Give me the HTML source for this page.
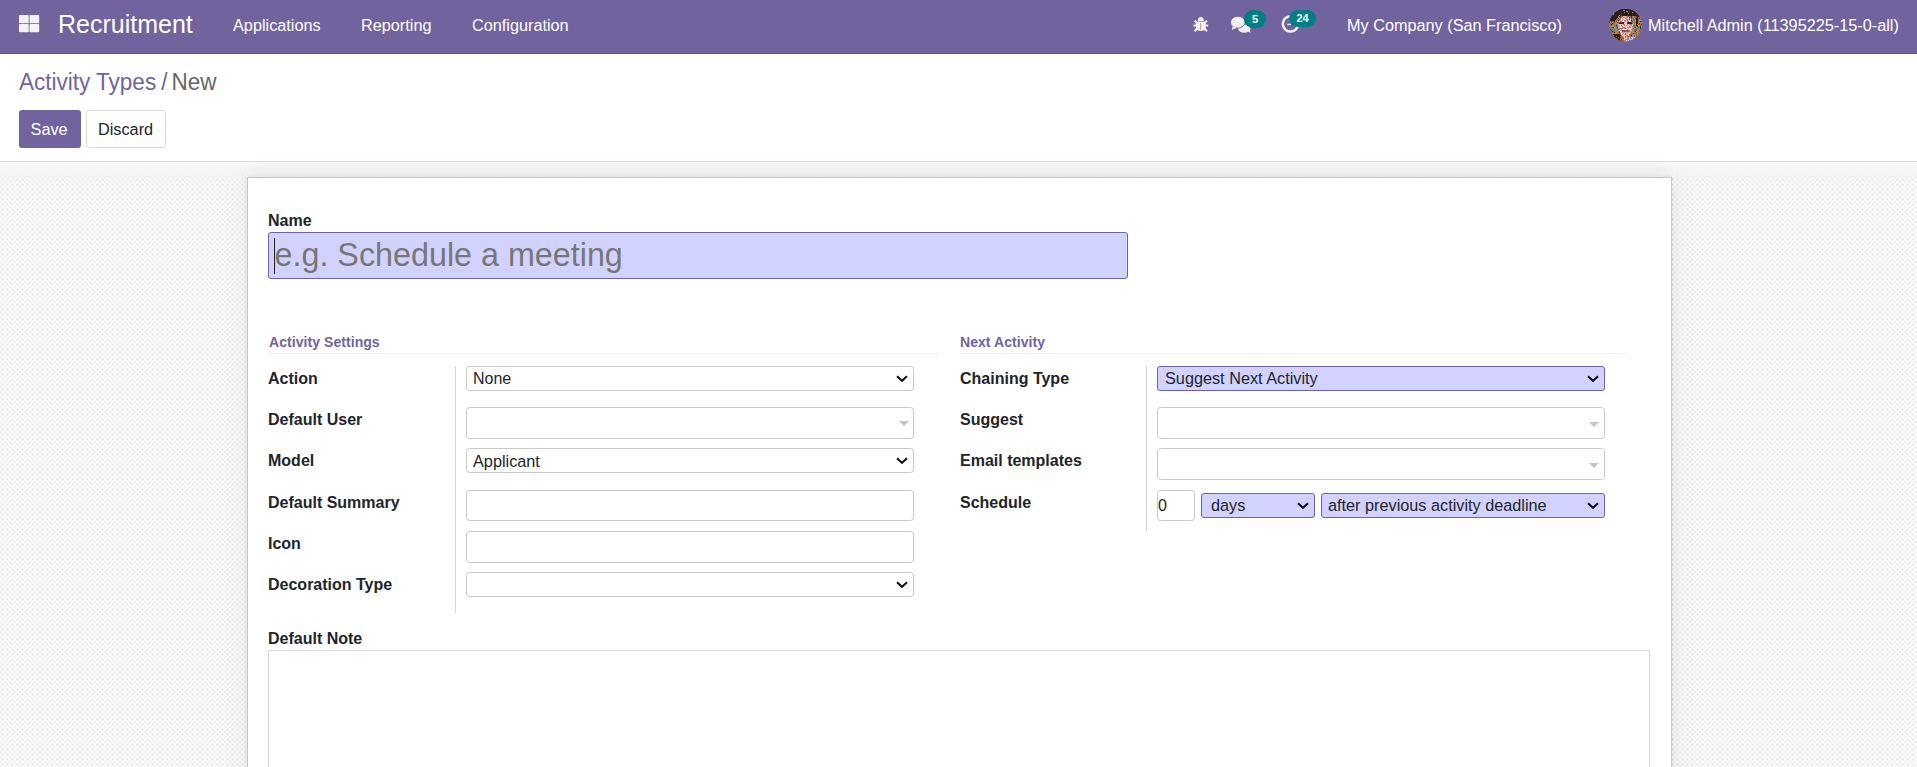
<!DOCTYPE html>
<html><head><meta charset="utf-8">
<style>
*{box-sizing:border-box;margin:0;padding:0}
html,body{width:1917px;height:767px;overflow:hidden;background:#fff;font-family:"Liberation Sans",sans-serif;color:#212529}
.a{position:absolute;white-space:nowrap}
.t16{font-size:16px;line-height:16px}
.n16{font-size:16.25px;line-height:16px}
.b{font-weight:700}
#nav{position:absolute;left:0;top:0;width:1917px;height:54px;background:#71639e;border-bottom:1px solid #5e5189}
#nav .a{color:#fff}
#cp{position:absolute;left:0;top:54px;width:1917px;height:108px;background:#fff;border-bottom:1px solid #dcdcdc}
#bg{position:absolute;left:0;top:162px;width:1917px;height:605px;
 background-color:#fdfdfd;
 background-image:radial-gradient(circle at 2.5px 2.5px,#e7e7e7 0,#e9e9e9 0.7px,rgba(233,233,233,0) 1.6px),radial-gradient(circle at 2.5px 2.5px,#e7e7e7 0,#e9e9e9 0.7px,rgba(233,233,233,0) 1.6px);
 background-size:5px 5px;background-position:0 0,2.5px 2.5px;
}
#band{position:absolute;left:0;top:162px;width:1917px;height:16px;background:linear-gradient(#f7f7f7 0%,#f4f5f5 60%,rgba(242,243,243,.55) 100%)}
#sheet{position:absolute;left:247px;top:177px;width:1425px;height:620px;background:#fff;border:1px solid #c6c4d8;box-shadow:0 0 3px rgba(0,0,0,.08),0 0 24px rgba(0,0,0,.09)}
.sel{position:absolute;height:25px;border:1px solid #c8c8c8;border-radius:3.5px;background:#fff}
.inp{position:absolute;height:32px;border:1px solid #c8c8c8;border-radius:3.5px;background:#fff}
.foc{background:#d2d2ff;border-color:#6f62a6;border-radius:3px}
.chev{position:absolute;width:13px;height:8px}
.tri{position:absolute;width:0;height:0;border-left:5px solid transparent;border-right:5px solid transparent;border-top:5px solid #c4c4c4}
.vl{position:absolute;width:1px;background:#d6d6d6}
.hs{position:absolute;height:1px;background:#f0f0f0}
.sect{font-size:14px;line-height:14px;font-weight:700;color:#71639e;letter-spacing:.06px}
.badge{position:absolute;background:#017e84;color:#fff;font-size:11px;line-height:11px;font-weight:700;text-align:center}
</style></head><body>
<domain style="display:none">Computer-Use</domain>

<div id="nav">
  <svg class="a" style="left:19px;top:15px" width="21" height="18" viewBox="0 0 21 18">
    <rect x="0" y="0" width="9.7" height="8.2" rx=".8" fill="#f2f2f2"/>
    <rect x="10.5" y="0" width="9.7" height="8.2" rx=".8" fill="#f2f2f2"/>
    <rect x="0" y="9" width="9.7" height="8.2" rx=".8" fill="#f2f2f2"/>
    <rect x="10.5" y="9" width="9.7" height="8.2" rx=".8" fill="#f2f2f2"/>
  </svg>
  <div class="a" style="left:58px;top:12px;font-size:25px;line-height:25px">Recruitment</div>
  <div class="a n16" style="left:233px;top:17px">Applications</div>
  <div class="a n16" style="left:361px;top:17px">Reporting</div>
  <div class="a n16" style="left:472px;top:17px">Configuration</div>

  <!-- bug -->
  <svg class="a" style="left:1188px;top:12px" width="26" height="24" viewBox="0 0 26 24" fill="#f0f0f0" stroke="#f0f0f0">
    <path d="M9.8 9 Q9.8 5 12.8 5 Q15.8 5 15.8 9 Z" stroke="none"/>
    <path d="M8.8 9.6 H16.8 Q17.8 9.6 17.8 11 V15 Q17.8 19 12.8 19 Q7.8 19 7.8 15 V11 Q7.8 9.6 8.8 9.6 Z" stroke="none"/>
    <g stroke-width="2" stroke-linecap="butt">
      <line x1="6.6" y1="8.6" x2="9.6" y2="11.6"/>
      <line x1="19" y1="8.6" x2="16" y2="11.6"/>
      <line x1="5.4" y1="13.5" x2="20.2" y2="13.5"/>
      <line x1="6.6" y1="19.2" x2="9.4" y2="16.2"/>
      <line x1="19" y1="19.2" x2="16.2" y2="16.2"/>
    </g>
    <line x1="12.6" y1="11" x2="12.6" y2="18.4" stroke="#c29f8c" stroke-width="1"/>
  </svg>
  <!-- comments -->
  <svg class="a" style="left:1226px;top:6px" width="44" height="30" viewBox="0 0 44 30" fill="#f0f0f0">
    <ellipse cx="18.2" cy="22.6" rx="6.2" ry="4.1"/>
    <path d="M21.5 25 L24.6 26.9 L23.6 23 Z"/>
    <ellipse cx="11.8" cy="16.2" rx="7.3" ry="5.9" stroke="#71639e" stroke-width=".9"/>
    <path d="M6.6 20.2 L5.9 24.1 L10.8 21.4 Z"/>
  </svg>
  <div class="badge" style="left:1244px;top:10px;width:22px;height:18px;border-radius:9px;padding-top:4px">5</div>
  <!-- clock -->
  <svg class="a" style="left:1276px;top:6px" width="30" height="30" viewBox="0 0 30 30">
    <circle cx="14.5" cy="17.9" r="7.7" fill="none" stroke="#f0f0f0" stroke-width="2.5"/>
    <line x1="11.3" y1="18.4" x2="15" y2="18.4" stroke="#f0f0f0" stroke-width="1.5"/>
  </svg>
  <div class="badge" style="left:1289px;top:10px;width:27px;height:17px;border-radius:8.5px;padding-top:3px">24</div>

  <div class="a n16" style="left:1347px;top:17px">My Company (San Francisco)</div>
  <!-- avatar -->
  <svg class="a" style="left:1609px;top:9px" width="33" height="33" viewBox="0 0 33 33"><defs><clipPath id="av"><circle cx="16.5" cy="16" r="16.4"/></clipPath></defs><g clip-path="url(#av)" shape-rendering="crispEdges"><rect x="11" y="0" width="1" height="1" fill="#2a1c18"/><rect x="12" y="0" width="1" height="1" fill="#32201a"/><rect x="13" y="0" width="1" height="1" fill="#2a1c18"/><rect x="14" y="0" width="1" height="1" fill="#2a1c18"/><rect x="15" y="0" width="1" height="1" fill="#32201a"/><rect x="16" y="0" width="1" height="1" fill="#32201a"/><rect x="17" y="0" width="1" height="1" fill="#2a1c18"/><rect x="18" y="0" width="1" height="1" fill="#32201a"/><rect x="19" y="0" width="1" height="1" fill="#32201a"/><rect x="20" y="0" width="1" height="1" fill="#2a1c18"/><rect x="21" y="0" width="1" height="1" fill="#2a1c18"/><rect x="9" y="1" width="1" height="1" fill="#2a1c18"/><rect x="10" y="1" width="1" height="1" fill="#2a1c18"/><rect x="11" y="1" width="1" height="1" fill="#2a1c18"/><rect x="12" y="1" width="1" height="1" fill="#32201a"/><rect x="13" y="1" width="1" height="1" fill="#2a1c18"/><rect x="14" y="1" width="1" height="1" fill="#8a8480"/><rect x="15" y="1" width="1" height="1" fill="#8a8480"/><rect x="16" y="1" width="1" height="1" fill="#32201a"/><rect x="17" y="1" width="1" height="1" fill="#32201a"/><rect x="18" y="1" width="1" height="1" fill="#2a1c18"/><rect x="19" y="1" width="1" height="1" fill="#2a1c18"/><rect x="20" y="1" width="1" height="1" fill="#32201a"/><rect x="21" y="1" width="1" height="1" fill="#2a1c18"/><rect x="22" y="1" width="1" height="1" fill="#2a1c18"/><rect x="23" y="1" width="1" height="1" fill="#2a1c18"/><rect x="7" y="2" width="1" height="1" fill="#2a1c18"/><rect x="8" y="2" width="1" height="1" fill="#2a1c18"/><rect x="9" y="2" width="1" height="1" fill="#2a1c18"/><rect x="10" y="2" width="1" height="1" fill="#2a1c18"/><rect x="11" y="2" width="1" height="1" fill="#32201a"/><rect x="12" y="2" width="1" height="1" fill="#32201a"/><rect x="13" y="2" width="1" height="1" fill="#2a1c18"/><rect x="14" y="2" width="1" height="1" fill="#32201a"/><rect x="15" y="2" width="1" height="1" fill="#2a1c18"/><rect x="16" y="2" width="1" height="1" fill="#2a1c18"/><rect x="17" y="2" width="1" height="1" fill="#8a8480"/><rect x="18" y="2" width="1" height="1" fill="#8a8480"/><rect x="19" y="2" width="1" height="1" fill="#2a1c18"/><rect x="20" y="2" width="1" height="1" fill="#6a3a1a"/><rect x="21" y="2" width="1" height="1" fill="#2a1c18"/><rect x="22" y="2" width="1" height="1" fill="#2a1c18"/><rect x="23" y="2" width="1" height="1" fill="#2a1c18"/><rect x="24" y="2" width="1" height="1" fill="#2a1c18"/><rect x="25" y="2" width="1" height="1" fill="#2a1c18"/><rect x="6" y="3" width="1" height="1" fill="#2a1c18"/><rect x="7" y="3" width="1" height="1" fill="#2a1c18"/><rect x="8" y="3" width="1" height="1" fill="#2a1c18"/><rect x="9" y="3" width="1" height="1" fill="#2a1c18"/><rect x="10" y="3" width="1" height="1" fill="#2a1c18"/><rect x="11" y="3" width="1" height="1" fill="#2a1c18"/><rect x="12" y="3" width="1" height="1" fill="#2a1c18"/><rect x="13" y="3" width="1" height="1" fill="#2a1c18"/><rect x="14" y="3" width="1" height="1" fill="#2a1c18"/><rect x="15" y="3" width="1" height="1" fill="#8a8480"/><rect x="16" y="3" width="1" height="1" fill="#2a1c18"/><rect x="17" y="3" width="1" height="1" fill="#2a1c18"/><rect x="18" y="3" width="1" height="1" fill="#32201a"/><rect x="19" y="3" width="1" height="1" fill="#2a1c18"/><rect x="20" y="3" width="1" height="1" fill="#2a1c18"/><rect x="21" y="3" width="1" height="1" fill="#2a1c18"/><rect x="22" y="3" width="1" height="1" fill="#2a1c18"/><rect x="23" y="3" width="1" height="1" fill="#8a8480"/><rect x="24" y="3" width="1" height="1" fill="#6a3a1a"/><rect x="25" y="3" width="1" height="1" fill="#2a1c18"/><rect x="26" y="3" width="1" height="1" fill="#2a1c18"/><rect x="5" y="4" width="1" height="1" fill="#2a1c18"/><rect x="6" y="4" width="1" height="1" fill="#2a1c18"/><rect x="7" y="4" width="1" height="1" fill="#2a1c18"/><rect x="8" y="4" width="1" height="1" fill="#2a1c18"/><rect x="9" y="4" width="1" height="1" fill="#32201a"/><rect x="10" y="4" width="1" height="1" fill="#2a1c18"/><rect x="11" y="4" width="1" height="1" fill="#2a1c18"/><rect x="12" y="4" width="1" height="1" fill="#6a3a1a"/><rect x="13" y="4" width="1" height="1" fill="#2a1c18"/><rect x="14" y="4" width="1" height="1" fill="#32201a"/><rect x="15" y="4" width="1" height="1" fill="#2a1c18"/><rect x="16" y="4" width="1" height="1" fill="#2a1c18"/><rect x="17" y="4" width="1" height="1" fill="#2a1c18"/><rect x="18" y="4" width="1" height="1" fill="#2a1c18"/><rect x="19" y="4" width="1" height="1" fill="#8a8480"/><rect x="20" y="4" width="1" height="1" fill="#2a1c18"/><rect x="21" y="4" width="1" height="1" fill="#2a1c18"/><rect x="22" y="4" width="1" height="1" fill="#2a1c18"/><rect x="23" y="4" width="1" height="1" fill="#2a1c18"/><rect x="24" y="4" width="1" height="1" fill="#2a1c18"/><rect x="25" y="4" width="1" height="1" fill="#2a1c18"/><rect x="26" y="4" width="1" height="1" fill="#32201a"/><rect x="27" y="4" width="1" height="1" fill="#2a1c18"/><rect x="4" y="5" width="1" height="1" fill="#8a8480"/><rect x="5" y="5" width="1" height="1" fill="#2a1c18"/><rect x="6" y="5" width="1" height="1" fill="#2a1c18"/><rect x="7" y="5" width="1" height="1" fill="#2a1c18"/><rect x="8" y="5" width="1" height="1" fill="#2a1c18"/><rect x="9" y="5" width="1" height="1" fill="#2a1c18"/><rect x="10" y="5" width="1" height="1" fill="#2a1c18"/><rect x="11" y="5" width="1" height="1" fill="#2a1c18"/><rect x="12" y="5" width="1" height="1" fill="#32201a"/><rect x="13" y="5" width="1" height="1" fill="#2a1c18"/><rect x="14" y="5" width="1" height="1" fill="#32201a"/><rect x="15" y="5" width="1" height="1" fill="#2a1c18"/><rect x="16" y="5" width="1" height="1" fill="#2a1c18"/><rect x="17" y="5" width="1" height="1" fill="#2a1c18"/><rect x="18" y="5" width="1" height="1" fill="#2a1c18"/><rect x="19" y="5" width="1" height="1" fill="#32201a"/><rect x="20" y="5" width="1" height="1" fill="#2a1c18"/><rect x="21" y="5" width="1" height="1" fill="#2a1c18"/><rect x="22" y="5" width="1" height="1" fill="#2a1c18"/><rect x="23" y="5" width="1" height="1" fill="#2a1c18"/><rect x="24" y="5" width="1" height="1" fill="#2a1c18"/><rect x="25" y="5" width="1" height="1" fill="#2a1c18"/><rect x="26" y="5" width="1" height="1" fill="#2a1c18"/><rect x="27" y="5" width="1" height="1" fill="#6a3a1a"/><rect x="28" y="5" width="1" height="1" fill="#2a1c18"/><rect x="3" y="6" width="1" height="1" fill="#2a1c18"/><rect x="4" y="6" width="1" height="1" fill="#2a1c18"/><rect x="5" y="6" width="1" height="1" fill="#2a1c18"/><rect x="6" y="6" width="1" height="1" fill="#32201a"/><rect x="7" y="6" width="1" height="1" fill="#2a1c18"/><rect x="8" y="6" width="1" height="1" fill="#2a1c18"/><rect x="9" y="6" width="1" height="1" fill="#2a1c18"/><rect x="10" y="6" width="1" height="1" fill="#8a8480"/><rect x="11" y="6" width="1" height="1" fill="#2a1c18"/><rect x="12" y="6" width="1" height="1" fill="#6a3a1a"/><rect x="13" y="6" width="1" height="1" fill="#2a1c18"/><rect x="14" y="6" width="1" height="1" fill="#2a1c18"/><rect x="15" y="6" width="1" height="1" fill="#32201a"/><rect x="16" y="6" width="1" height="1" fill="#2a1c18"/><rect x="17" y="6" width="1" height="1" fill="#2a1c18"/><rect x="18" y="6" width="1" height="1" fill="#6a3a1a"/><rect x="19" y="6" width="1" height="1" fill="#2a1c18"/><rect x="20" y="6" width="1" height="1" fill="#2a1c18"/><rect x="21" y="6" width="1" height="1" fill="#32201a"/><rect x="22" y="6" width="1" height="1" fill="#2a1c18"/><rect x="23" y="6" width="1" height="1" fill="#32201a"/><rect x="24" y="6" width="1" height="1" fill="#2a1c18"/><rect x="25" y="6" width="1" height="1" fill="#2a1c18"/><rect x="26" y="6" width="1" height="1" fill="#2a1c18"/><rect x="27" y="6" width="1" height="1" fill="#2a1c18"/><rect x="28" y="6" width="1" height="1" fill="#2a1c18"/><rect x="29" y="6" width="1" height="1" fill="#2a1c18"/><rect x="2" y="7" width="1" height="1" fill="#2a1c18"/><rect x="3" y="7" width="1" height="1" fill="#2a1c18"/><rect x="4" y="7" width="1" height="1" fill="#2a1c18"/><rect x="5" y="7" width="1" height="1" fill="#32201a"/><rect x="6" y="7" width="1" height="1" fill="#2a1c18"/><rect x="7" y="7" width="1" height="1" fill="#2a1c18"/><rect x="8" y="7" width="1" height="1" fill="#2a1c18"/><rect x="9" y="7" width="1" height="1" fill="#9c948c"/><rect x="10" y="7" width="1" height="1" fill="#4a2c1c"/><rect x="11" y="7" width="1" height="1" fill="#4a2c1c"/><rect x="12" y="7" width="1" height="1" fill="#787470"/><rect x="13" y="7" width="1" height="1" fill="#b0601c"/><rect x="14" y="7" width="1" height="1" fill="#e4bcb0"/><rect x="15" y="7" width="1" height="1" fill="#e4bcb0"/><rect x="16" y="7" width="1" height="1" fill="#e8c8c0"/><rect x="17" y="7" width="1" height="1" fill="#c890b0"/><rect x="18" y="7" width="1" height="1" fill="#8c8a90"/><rect x="19" y="7" width="1" height="1" fill="#b0601c"/><rect x="20" y="7" width="1" height="1" fill="#787470"/><rect x="21" y="7" width="1" height="1" fill="#787470"/><rect x="22" y="7" width="1" height="1" fill="#4a2c1c"/><rect x="23" y="7" width="1" height="1" fill="#8a8a86"/><rect x="24" y="7" width="1" height="1" fill="#9c948c"/><rect x="25" y="7" width="1" height="1" fill="#b0601c"/><rect x="26" y="7" width="1" height="1" fill="#787470"/><rect x="27" y="7" width="1" height="1" fill="#6a3a1a"/><rect x="28" y="7" width="1" height="1" fill="#2a1c18"/><rect x="29" y="7" width="1" height="1" fill="#4a2c1c"/><rect x="30" y="7" width="1" height="1" fill="#4a2c1c"/><rect x="2" y="8" width="1" height="1" fill="#2a1c18"/><rect x="3" y="8" width="1" height="1" fill="#2a1c18"/><rect x="4" y="8" width="1" height="1" fill="#2a1c18"/><rect x="5" y="8" width="1" height="1" fill="#32201a"/><rect x="6" y="8" width="1" height="1" fill="#2a1c18"/><rect x="7" y="8" width="1" height="1" fill="#2a1c18"/><rect x="8" y="8" width="1" height="1" fill="#2a1c18"/><rect x="9" y="8" width="1" height="1" fill="#d09038"/><rect x="10" y="8" width="1" height="1" fill="#9a5a28"/><rect x="11" y="8" width="1" height="1" fill="#787470"/><rect x="12" y="8" width="1" height="1" fill="#787470"/><rect x="13" y="8" width="1" height="1" fill="#d4a092"/><rect x="14" y="8" width="1" height="1" fill="#c08070"/><rect x="15" y="8" width="1" height="1" fill="#c08070"/><rect x="16" y="8" width="1" height="1" fill="#e4bcb0"/><rect x="17" y="8" width="1" height="1" fill="#c08070"/><rect x="18" y="8" width="1" height="1" fill="#8c8a90"/><rect x="19" y="8" width="1" height="1" fill="#e8c8c0"/><rect x="20" y="8" width="1" height="1" fill="#4a2c1c"/><rect x="21" y="8" width="1" height="1" fill="#8a8a86"/><rect x="22" y="8" width="1" height="1" fill="#4a2c1c"/><rect x="23" y="8" width="1" height="1" fill="#787470"/><rect x="24" y="8" width="1" height="1" fill="#8a8a86"/><rect x="25" y="8" width="1" height="1" fill="#9a5a28"/><rect x="26" y="8" width="1" height="1" fill="#b0601c"/><rect x="27" y="8" width="1" height="1" fill="#6a3a1a"/><rect x="28" y="8" width="1" height="1" fill="#2a1c18"/><rect x="29" y="8" width="1" height="1" fill="#787470"/><rect x="30" y="8" width="1" height="1" fill="#787470"/><rect x="1" y="9" width="1" height="1" fill="#2a1c18"/><rect x="2" y="9" width="1" height="1" fill="#32201a"/><rect x="3" y="9" width="1" height="1" fill="#2a1c18"/><rect x="4" y="9" width="1" height="1" fill="#32201a"/><rect x="5" y="9" width="1" height="1" fill="#2a1c18"/><rect x="6" y="9" width="1" height="1" fill="#2a1c18"/><rect x="7" y="9" width="1" height="1" fill="#2a1c18"/><rect x="8" y="9" width="1" height="1" fill="#8a8a86"/><rect x="9" y="9" width="1" height="1" fill="#4a2c1c"/><rect x="10" y="9" width="1" height="1" fill="#c07028"/><rect x="11" y="9" width="1" height="1" fill="#c07028"/><rect x="12" y="9" width="1" height="1" fill="#e8c8c0"/><rect x="13" y="9" width="1" height="1" fill="#c890b0"/><rect x="14" y="9" width="1" height="1" fill="#f0d6cc"/><rect x="15" y="9" width="1" height="1" fill="#e8c8c0"/><rect x="16" y="9" width="1" height="1" fill="#d4a092"/><rect x="17" y="9" width="1" height="1" fill="#c890b0"/><rect x="18" y="9" width="1" height="1" fill="#e4bcb0"/><rect x="19" y="9" width="1" height="1" fill="#f0d6cc"/><rect x="20" y="9" width="1" height="1" fill="#a86858"/><rect x="21" y="9" width="1" height="1" fill="#9c948c"/><rect x="22" y="9" width="1" height="1" fill="#9a5a28"/><rect x="23" y="9" width="1" height="1" fill="#8a8a86"/><rect x="24" y="9" width="1" height="1" fill="#787470"/><rect x="25" y="9" width="1" height="1" fill="#8a8a86"/><rect x="26" y="9" width="1" height="1" fill="#b0601c"/><rect x="27" y="9" width="1" height="1" fill="#2a1c18"/><rect x="28" y="9" width="1" height="1" fill="#2a1c18"/><rect x="29" y="9" width="1" height="1" fill="#9a5a28"/><rect x="30" y="9" width="1" height="1" fill="#4a2c1c"/><rect x="31" y="9" width="1" height="1" fill="#9c948c"/><rect x="1" y="10" width="1" height="1" fill="#2a1c18"/><rect x="2" y="10" width="1" height="1" fill="#2a1c18"/><rect x="3" y="10" width="1" height="1" fill="#2a1c18"/><rect x="4" y="10" width="1" height="1" fill="#2a1c18"/><rect x="5" y="10" width="1" height="1" fill="#2a1c18"/><rect x="6" y="10" width="1" height="1" fill="#2a1c18"/><rect x="7" y="10" width="1" height="1" fill="#787470"/><rect x="8" y="10" width="1" height="1" fill="#787470"/><rect x="9" y="10" width="1" height="1" fill="#8a8a86"/><rect x="10" y="10" width="1" height="1" fill="#9a5a28"/><rect x="11" y="10" width="1" height="1" fill="#8c8a90"/><rect x="12" y="10" width="1" height="1" fill="#f0d6cc"/><rect x="13" y="10" width="1" height="1" fill="#e4bcb0"/><rect x="14" y="10" width="1" height="1" fill="#e4bcb0"/><rect x="15" y="10" width="1" height="1" fill="#e8c8c0"/><rect x="16" y="10" width="1" height="1" fill="#e4bcb0"/><rect x="17" y="10" width="1" height="1" fill="#c890b0"/><rect x="18" y="10" width="1" height="1" fill="#c08070"/><rect x="19" y="10" width="1" height="1" fill="#d4a092"/><rect x="20" y="10" width="1" height="1" fill="#a86858"/><rect x="21" y="10" width="1" height="1" fill="#e4bcb0"/><rect x="22" y="10" width="1" height="1" fill="#b0601c"/><rect x="23" y="10" width="1" height="1" fill="#8a8a86"/><rect x="24" y="10" width="1" height="1" fill="#b0601c"/><rect x="25" y="10" width="1" height="1" fill="#9a5a28"/><rect x="26" y="10" width="1" height="1" fill="#c07028"/><rect x="27" y="10" width="1" height="1" fill="#2a1c18"/><rect x="28" y="10" width="1" height="1" fill="#2a1c18"/><rect x="29" y="10" width="1" height="1" fill="#787470"/><rect x="30" y="10" width="1" height="1" fill="#8a8a86"/><rect x="31" y="10" width="1" height="1" fill="#787470"/><rect x="0" y="11" width="1" height="1" fill="#32201a"/><rect x="1" y="11" width="1" height="1" fill="#2a1c18"/><rect x="2" y="11" width="1" height="1" fill="#2a1c18"/><rect x="3" y="11" width="1" height="1" fill="#32201a"/><rect x="4" y="11" width="1" height="1" fill="#2a1c18"/><rect x="5" y="11" width="1" height="1" fill="#2a1c18"/><rect x="6" y="11" width="1" height="1" fill="#c07028"/><rect x="7" y="11" width="1" height="1" fill="#b0601c"/><rect x="8" y="11" width="1" height="1" fill="#8a8a86"/><rect x="9" y="11" width="1" height="1" fill="#4a2c1c"/><rect x="10" y="11" width="1" height="1" fill="#c07028"/><rect x="11" y="11" width="1" height="1" fill="#d4a092"/><rect x="12" y="11" width="1" height="1" fill="#d4a092"/><rect x="13" y="11" width="1" height="1" fill="#c890b0"/><rect x="14" y="11" width="1" height="1" fill="#f0d6cc"/><rect x="15" y="11" width="1" height="1" fill="#c08070"/><rect x="16" y="11" width="1" height="1" fill="#a86858"/><rect x="17" y="11" width="1" height="1" fill="#d4a092"/><rect x="18" y="11" width="1" height="1" fill="#a86858"/><rect x="19" y="11" width="1" height="1" fill="#e8c8c0"/><rect x="20" y="11" width="1" height="1" fill="#e4bcb0"/><rect x="21" y="11" width="1" height="1" fill="#e8c8c0"/><rect x="22" y="11" width="1" height="1" fill="#4a2c1c"/><rect x="23" y="11" width="1" height="1" fill="#b0601c"/><rect x="24" y="11" width="1" height="1" fill="#8a8a86"/><rect x="25" y="11" width="1" height="1" fill="#787470"/><rect x="26" y="11" width="1" height="1" fill="#9c948c"/><rect x="27" y="11" width="1" height="1" fill="#2a1c18"/><rect x="28" y="11" width="1" height="1" fill="#32201a"/><rect x="29" y="11" width="1" height="1" fill="#9a5a28"/><rect x="30" y="11" width="1" height="1" fill="#d09038"/><rect x="31" y="11" width="1" height="1" fill="#9c948c"/><rect x="32" y="11" width="1" height="1" fill="#8a8a86"/><rect x="0" y="12" width="1" height="1" fill="#4a2c1c"/><rect x="1" y="12" width="1" height="1" fill="#c07028"/><rect x="2" y="12" width="1" height="1" fill="#4a2c1c"/><rect x="3" y="12" width="1" height="1" fill="#9a5a28"/><rect x="4" y="12" width="1" height="1" fill="#787470"/><rect x="5" y="12" width="1" height="1" fill="#4a2c1c"/><rect x="6" y="12" width="1" height="1" fill="#c07028"/><rect x="7" y="12" width="1" height="1" fill="#9a5a28"/><rect x="8" y="12" width="1" height="1" fill="#9c948c"/><rect x="9" y="12" width="1" height="1" fill="#9c948c"/><rect x="10" y="12" width="1" height="1" fill="#f0d6cc"/><rect x="11" y="12" width="1" height="1" fill="#a86858"/><rect x="12" y="12" width="1" height="1" fill="#d4a092"/><rect x="13" y="12" width="1" height="1" fill="#e8c8c0"/><rect x="14" y="12" width="1" height="1" fill="#e8c8c0"/><rect x="15" y="12" width="1" height="1" fill="#d4a092"/><rect x="16" y="12" width="1" height="1" fill="#e4bcb0"/><rect x="17" y="12" width="1" height="1" fill="#f0d6cc"/><rect x="18" y="12" width="1" height="1" fill="#c08070"/><rect x="19" y="12" width="1" height="1" fill="#a86858"/><rect x="20" y="12" width="1" height="1" fill="#f0d6cc"/><rect x="21" y="12" width="1" height="1" fill="#e4bcb0"/><rect x="22" y="12" width="1" height="1" fill="#a86858"/><rect x="23" y="12" width="1" height="1" fill="#b0601c"/><rect x="24" y="12" width="1" height="1" fill="#d09038"/><rect x="25" y="12" width="1" height="1" fill="#c07028"/><rect x="26" y="12" width="1" height="1" fill="#8a8a86"/><rect x="27" y="12" width="1" height="1" fill="#2a1c18"/><rect x="28" y="12" width="1" height="1" fill="#2a1c18"/><rect x="29" y="12" width="1" height="1" fill="#c07028"/><rect x="30" y="12" width="1" height="1" fill="#787470"/><rect x="31" y="12" width="1" height="1" fill="#4a2c1c"/><rect x="32" y="12" width="1" height="1" fill="#9a5a28"/><rect x="0" y="13" width="1" height="1" fill="#4a2c1c"/><rect x="1" y="13" width="1" height="1" fill="#9c948c"/><rect x="2" y="13" width="1" height="1" fill="#787470"/><rect x="3" y="13" width="1" height="1" fill="#9c948c"/><rect x="4" y="13" width="1" height="1" fill="#b0601c"/><rect x="5" y="13" width="1" height="1" fill="#c07028"/><rect x="6" y="13" width="1" height="1" fill="#787470"/><rect x="7" y="13" width="1" height="1" fill="#8a8a86"/><rect x="8" y="13" width="1" height="1" fill="#4a2c1c"/><rect x="9" y="13" width="1" height="1" fill="#787470"/><rect x="10" y="13" width="1" height="1" fill="#6a4030"/><rect x="11" y="13" width="1" height="1" fill="#6a4030"/><rect x="12" y="13" width="1" height="1" fill="#6a4030"/><rect x="13" y="13" width="1" height="1" fill="#3a2620"/><rect x="14" y="13" width="1" height="1" fill="#3a2620"/><rect x="15" y="13" width="1" height="1" fill="#c890b0"/><rect x="16" y="13" width="1" height="1" fill="#e8c8c0"/><rect x="17" y="13" width="1" height="1" fill="#e8c8c0"/><rect x="18" y="13" width="1" height="1" fill="#6a4030"/><rect x="19" y="13" width="1" height="1" fill="#2a1c18"/><rect x="20" y="13" width="1" height="1" fill="#3a2620"/><rect x="21" y="13" width="1" height="1" fill="#2a1c18"/><rect x="22" y="13" width="1" height="1" fill="#6a4030"/><rect x="23" y="13" width="1" height="1" fill="#787470"/><rect x="24" y="13" width="1" height="1" fill="#787470"/><rect x="25" y="13" width="1" height="1" fill="#c07028"/><rect x="26" y="13" width="1" height="1" fill="#787470"/><rect x="27" y="13" width="1" height="1" fill="#32201a"/><rect x="28" y="13" width="1" height="1" fill="#32201a"/><rect x="29" y="13" width="1" height="1" fill="#b0601c"/><rect x="30" y="13" width="1" height="1" fill="#9c948c"/><rect x="31" y="13" width="1" height="1" fill="#787470"/><rect x="32" y="13" width="1" height="1" fill="#8a8a86"/><rect x="0" y="14" width="1" height="1" fill="#9a5a28"/><rect x="1" y="14" width="1" height="1" fill="#787470"/><rect x="2" y="14" width="1" height="1" fill="#787470"/><rect x="3" y="14" width="1" height="1" fill="#4a2c1c"/><rect x="4" y="14" width="1" height="1" fill="#b0601c"/><rect x="5" y="14" width="1" height="1" fill="#787470"/><rect x="6" y="14" width="1" height="1" fill="#8a8a86"/><rect x="7" y="14" width="1" height="1" fill="#9c948c"/><rect x="8" y="14" width="1" height="1" fill="#9c948c"/><rect x="9" y="14" width="1" height="1" fill="#8a8a86"/><rect x="10" y="14" width="1" height="1" fill="#3a2620"/><rect x="11" y="14" width="1" height="1" fill="#3a2620"/><rect x="12" y="14" width="1" height="1" fill="#2a1c18"/><rect x="13" y="14" width="1" height="1" fill="#3a2620"/><rect x="14" y="14" width="1" height="1" fill="#3a2620"/><rect x="15" y="14" width="1" height="1" fill="#e8c8c0"/><rect x="16" y="14" width="1" height="1" fill="#e8c8c0"/><rect x="17" y="14" width="1" height="1" fill="#e8c8c0"/><rect x="18" y="14" width="1" height="1" fill="#6a4030"/><rect x="19" y="14" width="1" height="1" fill="#3a2620"/><rect x="20" y="14" width="1" height="1" fill="#2a1c18"/><rect x="21" y="14" width="1" height="1" fill="#2a1c18"/><rect x="22" y="14" width="1" height="1" fill="#3a2620"/><rect x="23" y="14" width="1" height="1" fill="#787470"/><rect x="24" y="14" width="1" height="1" fill="#9c948c"/><rect x="25" y="14" width="1" height="1" fill="#b0601c"/><rect x="26" y="14" width="1" height="1" fill="#d09038"/><rect x="27" y="14" width="1" height="1" fill="#2a1c18"/><rect x="28" y="14" width="1" height="1" fill="#2a1c18"/><rect x="29" y="14" width="1" height="1" fill="#c07028"/><rect x="30" y="14" width="1" height="1" fill="#4a2c1c"/><rect x="31" y="14" width="1" height="1" fill="#8a8a86"/><rect x="32" y="14" width="1" height="1" fill="#8a8a86"/><rect x="0" y="15" width="1" height="1" fill="#787470"/><rect x="1" y="15" width="1" height="1" fill="#b0601c"/><rect x="2" y="15" width="1" height="1" fill="#4a2c1c"/><rect x="3" y="15" width="1" height="1" fill="#b0601c"/><rect x="4" y="15" width="1" height="1" fill="#787470"/><rect x="5" y="15" width="1" height="1" fill="#8a8a86"/><rect x="6" y="15" width="1" height="1" fill="#c07028"/><rect x="7" y="15" width="1" height="1" fill="#787470"/><rect x="8" y="15" width="1" height="1" fill="#8a8a86"/><rect x="9" y="15" width="1" height="1" fill="#d4a092"/><rect x="10" y="15" width="1" height="1" fill="#f0d6cc"/><rect x="11" y="15" width="1" height="1" fill="#f0d6cc"/><rect x="12" y="15" width="1" height="1" fill="#e4bcb0"/><rect x="13" y="15" width="1" height="1" fill="#e4bcb0"/><rect x="14" y="15" width="1" height="1" fill="#c08070"/><rect x="15" y="15" width="1" height="1" fill="#c08070"/><rect x="16" y="15" width="1" height="1" fill="#f0d6cc"/><rect x="17" y="15" width="1" height="1" fill="#e8c8c0"/><rect x="18" y="15" width="1" height="1" fill="#c08070"/><rect x="19" y="15" width="1" height="1" fill="#e8c8c0"/><rect x="20" y="15" width="1" height="1" fill="#d4a092"/><rect x="21" y="15" width="1" height="1" fill="#a86858"/><rect x="22" y="15" width="1" height="1" fill="#a86858"/><rect x="23" y="15" width="1" height="1" fill="#e8c8c0"/><rect x="24" y="15" width="1" height="1" fill="#8a8a86"/><rect x="25" y="15" width="1" height="1" fill="#8a8a86"/><rect x="26" y="15" width="1" height="1" fill="#9c948c"/><rect x="27" y="15" width="1" height="1" fill="#2a1c18"/><rect x="28" y="15" width="1" height="1" fill="#8a8480"/><rect x="29" y="15" width="1" height="1" fill="#9a5a28"/><rect x="30" y="15" width="1" height="1" fill="#b0601c"/><rect x="31" y="15" width="1" height="1" fill="#c07028"/><rect x="32" y="15" width="1" height="1" fill="#4a2c1c"/><rect x="0" y="16" width="1" height="1" fill="#8a8a86"/><rect x="1" y="16" width="1" height="1" fill="#b0601c"/><rect x="2" y="16" width="1" height="1" fill="#9a5a28"/><rect x="3" y="16" width="1" height="1" fill="#8a8a86"/><rect x="4" y="16" width="1" height="1" fill="#d09038"/><rect x="5" y="16" width="1" height="1" fill="#b0601c"/><rect x="6" y="16" width="1" height="1" fill="#8a8a86"/><rect x="7" y="16" width="1" height="1" fill="#4a2c1c"/><rect x="8" y="16" width="1" height="1" fill="#b0601c"/><rect x="9" y="16" width="1" height="1" fill="#e4bcb0"/><rect x="10" y="16" width="1" height="1" fill="#c890b0"/><rect x="11" y="16" width="1" height="1" fill="#e8c8c0"/><rect x="12" y="16" width="1" height="1" fill="#8c8a90"/><rect x="13" y="16" width="1" height="1" fill="#e4bcb0"/><rect x="14" y="16" width="1" height="1" fill="#f0d6cc"/><rect x="15" y="16" width="1" height="1" fill="#a86858"/><rect x="16" y="16" width="1" height="1" fill="#f0d6cc"/><rect x="17" y="16" width="1" height="1" fill="#c890b0"/><rect x="18" y="16" width="1" height="1" fill="#e4bcb0"/><rect x="19" y="16" width="1" height="1" fill="#e4bcb0"/><rect x="20" y="16" width="1" height="1" fill="#e4bcb0"/><rect x="21" y="16" width="1" height="1" fill="#e4bcb0"/><rect x="22" y="16" width="1" height="1" fill="#c08070"/><rect x="23" y="16" width="1" height="1" fill="#f0d6cc"/><rect x="24" y="16" width="1" height="1" fill="#787470"/><rect x="25" y="16" width="1" height="1" fill="#b0601c"/><rect x="26" y="16" width="1" height="1" fill="#c07028"/><rect x="27" y="16" width="1" height="1" fill="#2a1c18"/><rect x="28" y="16" width="1" height="1" fill="#2a1c18"/><rect x="29" y="16" width="1" height="1" fill="#9c948c"/><rect x="30" y="16" width="1" height="1" fill="#9c948c"/><rect x="31" y="16" width="1" height="1" fill="#b0601c"/><rect x="32" y="16" width="1" height="1" fill="#b0601c"/><rect x="0" y="17" width="1" height="1" fill="#9c948c"/><rect x="1" y="17" width="1" height="1" fill="#8a8a86"/><rect x="2" y="17" width="1" height="1" fill="#d09038"/><rect x="3" y="17" width="1" height="1" fill="#8a8a86"/><rect x="4" y="17" width="1" height="1" fill="#8a8a86"/><rect x="5" y="17" width="1" height="1" fill="#787470"/><rect x="6" y="17" width="1" height="1" fill="#8a8a86"/><rect x="7" y="17" width="1" height="1" fill="#787470"/><rect x="8" y="17" width="1" height="1" fill="#b0601c"/><rect x="9" y="17" width="1" height="1" fill="#c890b0"/><rect x="10" y="17" width="1" height="1" fill="#e8c8c0"/><rect x="11" y="17" width="1" height="1" fill="#e4bcb0"/><rect x="12" y="17" width="1" height="1" fill="#f0d6cc"/><rect x="13" y="17" width="1" height="1" fill="#a86858"/><rect x="14" y="17" width="1" height="1" fill="#f0d6cc"/><rect x="15" y="17" width="1" height="1" fill="#e4bcb0"/><rect x="16" y="17" width="1" height="1" fill="#e4bcb0"/><rect x="17" y="17" width="1" height="1" fill="#f0d6cc"/><rect x="18" y="17" width="1" height="1" fill="#e4bcb0"/><rect x="19" y="17" width="1" height="1" fill="#e8c8c0"/><rect x="20" y="17" width="1" height="1" fill="#a86858"/><rect x="21" y="17" width="1" height="1" fill="#c890b0"/><rect x="22" y="17" width="1" height="1" fill="#e8c8c0"/><rect x="23" y="17" width="1" height="1" fill="#c08070"/><rect x="24" y="17" width="1" height="1" fill="#8a8a86"/><rect x="25" y="17" width="1" height="1" fill="#787470"/><rect x="26" y="17" width="1" height="1" fill="#787470"/><rect x="27" y="17" width="1" height="1" fill="#8a8480"/><rect x="28" y="17" width="1" height="1" fill="#2a1c18"/><rect x="29" y="17" width="1" height="1" fill="#8a8a86"/><rect x="30" y="17" width="1" height="1" fill="#9c948c"/><rect x="31" y="17" width="1" height="1" fill="#4a2c1c"/><rect x="32" y="17" width="1" height="1" fill="#d09038"/><rect x="0" y="18" width="1" height="1" fill="#9a5a28"/><rect x="1" y="18" width="1" height="1" fill="#8a8a86"/><rect x="2" y="18" width="1" height="1" fill="#9a5a28"/><rect x="3" y="18" width="1" height="1" fill="#9a5a28"/><rect x="4" y="18" width="1" height="1" fill="#4a2c1c"/><rect x="5" y="18" width="1" height="1" fill="#d09038"/><rect x="6" y="18" width="1" height="1" fill="#d09038"/><rect x="7" y="18" width="1" height="1" fill="#8a8a86"/><rect x="8" y="18" width="1" height="1" fill="#4a2c1c"/><rect x="9" y="18" width="1" height="1" fill="#e4bcb0"/><rect x="10" y="18" width="1" height="1" fill="#d4a092"/><rect x="11" y="18" width="1" height="1" fill="#f0d6cc"/><rect x="12" y="18" width="1" height="1" fill="#e4bcb0"/><rect x="13" y="18" width="1" height="1" fill="#d4a092"/><rect x="14" y="18" width="1" height="1" fill="#c08070"/><rect x="15" y="18" width="1" height="1" fill="#c08070"/><rect x="16" y="18" width="1" height="1" fill="#d4a092"/><rect x="17" y="18" width="1" height="1" fill="#e8c8c0"/><rect x="18" y="18" width="1" height="1" fill="#c890b0"/><rect x="19" y="18" width="1" height="1" fill="#d4a092"/><rect x="20" y="18" width="1" height="1" fill="#c890b0"/><rect x="21" y="18" width="1" height="1" fill="#c08070"/><rect x="22" y="18" width="1" height="1" fill="#f0d6cc"/><rect x="23" y="18" width="1" height="1" fill="#d4a092"/><rect x="24" y="18" width="1" height="1" fill="#9c948c"/><rect x="25" y="18" width="1" height="1" fill="#787470"/><rect x="26" y="18" width="1" height="1" fill="#4a2c1c"/><rect x="27" y="18" width="1" height="1" fill="#d09038"/><rect x="28" y="18" width="1" height="1" fill="#9c948c"/><rect x="29" y="18" width="1" height="1" fill="#b0601c"/><rect x="30" y="18" width="1" height="1" fill="#787470"/><rect x="31" y="18" width="1" height="1" fill="#4a2c1c"/><rect x="32" y="18" width="1" height="1" fill="#8a8a86"/><rect x="0" y="19" width="1" height="1" fill="#8a8a86"/><rect x="1" y="19" width="1" height="1" fill="#b0601c"/><rect x="2" y="19" width="1" height="1" fill="#c07028"/><rect x="3" y="19" width="1" height="1" fill="#8a8a86"/><rect x="4" y="19" width="1" height="1" fill="#b0601c"/><rect x="5" y="19" width="1" height="1" fill="#8a8a86"/><rect x="6" y="19" width="1" height="1" fill="#9c948c"/><rect x="7" y="19" width="1" height="1" fill="#787470"/><rect x="8" y="19" width="1" height="1" fill="#787470"/><rect x="9" y="19" width="1" height="1" fill="#8c8a90"/><rect x="10" y="19" width="1" height="1" fill="#c08070"/><rect x="11" y="19" width="1" height="1" fill="#8c8a90"/><rect x="12" y="19" width="1" height="1" fill="#c08070"/><rect x="13" y="19" width="1" height="1" fill="#a86858"/><rect x="14" y="19" width="1" height="1" fill="#e4bcb0"/><rect x="15" y="19" width="1" height="1" fill="#c08070"/><rect x="16" y="19" width="1" height="1" fill="#a86858"/><rect x="17" y="19" width="1" height="1" fill="#e4bcb0"/><rect x="18" y="19" width="1" height="1" fill="#e8c8c0"/><rect x="19" y="19" width="1" height="1" fill="#e4bcb0"/><rect x="20" y="19" width="1" height="1" fill="#f0d6cc"/><rect x="21" y="19" width="1" height="1" fill="#e4bcb0"/><rect x="22" y="19" width="1" height="1" fill="#f0d6cc"/><rect x="23" y="19" width="1" height="1" fill="#c08070"/><rect x="24" y="19" width="1" height="1" fill="#b0601c"/><rect x="25" y="19" width="1" height="1" fill="#9c948c"/><rect x="26" y="19" width="1" height="1" fill="#8a8a86"/><rect x="27" y="19" width="1" height="1" fill="#787470"/><rect x="28" y="19" width="1" height="1" fill="#787470"/><rect x="29" y="19" width="1" height="1" fill="#8a8a86"/><rect x="30" y="19" width="1" height="1" fill="#8a8a86"/><rect x="31" y="19" width="1" height="1" fill="#4a2c1c"/><rect x="32" y="19" width="1" height="1" fill="#787470"/><rect x="0" y="20" width="1" height="1" fill="#8a8a86"/><rect x="1" y="20" width="1" height="1" fill="#4a2c1c"/><rect x="2" y="20" width="1" height="1" fill="#8a8a86"/><rect x="3" y="20" width="1" height="1" fill="#b0601c"/><rect x="4" y="20" width="1" height="1" fill="#c07028"/><rect x="5" y="20" width="1" height="1" fill="#b0601c"/><rect x="6" y="20" width="1" height="1" fill="#c07028"/><rect x="7" y="20" width="1" height="1" fill="#d09038"/><rect x="8" y="20" width="1" height="1" fill="#8a8a86"/><rect x="9" y="20" width="1" height="1" fill="#9a5a28"/><rect x="10" y="20" width="1" height="1" fill="#a86858"/><rect x="11" y="20" width="1" height="1" fill="#e4bcb0"/><rect x="12" y="20" width="1" height="1" fill="#8c8a90"/><rect x="13" y="20" width="1" height="1" fill="#e8c8c0"/><rect x="14" y="20" width="1" height="1" fill="#e4bcb0"/><rect x="15" y="20" width="1" height="1" fill="#e8c8c0"/><rect x="16" y="20" width="1" height="1" fill="#f0d6cc"/><rect x="17" y="20" width="1" height="1" fill="#f0d6cc"/><rect x="18" y="20" width="1" height="1" fill="#8c8a90"/><rect x="19" y="20" width="1" height="1" fill="#d4a092"/><rect x="20" y="20" width="1" height="1" fill="#f0d6cc"/><rect x="21" y="20" width="1" height="1" fill="#e8c8c0"/><rect x="22" y="20" width="1" height="1" fill="#c890b0"/><rect x="23" y="20" width="1" height="1" fill="#8a8a86"/><rect x="24" y="20" width="1" height="1" fill="#9c948c"/><rect x="25" y="20" width="1" height="1" fill="#9a5a28"/><rect x="26" y="20" width="1" height="1" fill="#787470"/><rect x="27" y="20" width="1" height="1" fill="#b0601c"/><rect x="28" y="20" width="1" height="1" fill="#787470"/><rect x="29" y="20" width="1" height="1" fill="#8a8a86"/><rect x="30" y="20" width="1" height="1" fill="#c07028"/><rect x="31" y="20" width="1" height="1" fill="#b0601c"/><rect x="32" y="20" width="1" height="1" fill="#787470"/><rect x="0" y="21" width="1" height="1" fill="#b0601c"/><rect x="1" y="21" width="1" height="1" fill="#8a8a86"/><rect x="2" y="21" width="1" height="1" fill="#4a2c1c"/><rect x="3" y="21" width="1" height="1" fill="#8a8a86"/><rect x="4" y="21" width="1" height="1" fill="#8a8a86"/><rect x="5" y="21" width="1" height="1" fill="#787470"/><rect x="6" y="21" width="1" height="1" fill="#8a8a86"/><rect x="7" y="21" width="1" height="1" fill="#d09038"/><rect x="8" y="21" width="1" height="1" fill="#787470"/><rect x="9" y="21" width="1" height="1" fill="#9c948c"/><rect x="10" y="21" width="1" height="1" fill="#e8c8c0"/><rect x="11" y="21" width="1" height="1" fill="#c890b0"/><rect x="12" y="21" width="1" height="1" fill="#d4a092"/><rect x="13" y="21" width="1" height="1" fill="#7a4a3a"/><rect x="14" y="21" width="1" height="1" fill="#a06050"/><rect x="15" y="21" width="1" height="1" fill="#a06050"/><rect x="16" y="21" width="1" height="1" fill="#a06050"/><rect x="17" y="21" width="1" height="1" fill="#a06050"/><rect x="18" y="21" width="1" height="1" fill="#7a4a3a"/><rect x="19" y="21" width="1" height="1" fill="#a06050"/><rect x="20" y="21" width="1" height="1" fill="#a86858"/><rect x="21" y="21" width="1" height="1" fill="#e4bcb0"/><rect x="22" y="21" width="1" height="1" fill="#d4a092"/><rect x="23" y="21" width="1" height="1" fill="#9c948c"/><rect x="24" y="21" width="1" height="1" fill="#9c948c"/><rect x="25" y="21" width="1" height="1" fill="#9a5a28"/><rect x="26" y="21" width="1" height="1" fill="#b0601c"/><rect x="27" y="21" width="1" height="1" fill="#b0601c"/><rect x="28" y="21" width="1" height="1" fill="#8a8a86"/><rect x="29" y="21" width="1" height="1" fill="#8a8a86"/><rect x="30" y="21" width="1" height="1" fill="#787470"/><rect x="31" y="21" width="1" height="1" fill="#b0601c"/><rect x="32" y="21" width="1" height="1" fill="#787470"/><rect x="1" y="22" width="1" height="1" fill="#b0601c"/><rect x="2" y="22" width="1" height="1" fill="#b0601c"/><rect x="3" y="22" width="1" height="1" fill="#4a2c1c"/><rect x="4" y="22" width="1" height="1" fill="#787470"/><rect x="5" y="22" width="1" height="1" fill="#787470"/><rect x="6" y="22" width="1" height="1" fill="#8a8a86"/><rect x="7" y="22" width="1" height="1" fill="#8a8a86"/><rect x="8" y="22" width="1" height="1" fill="#c07028"/><rect x="9" y="22" width="1" height="1" fill="#8a8a86"/><rect x="10" y="22" width="1" height="1" fill="#a86858"/><rect x="11" y="22" width="1" height="1" fill="#e8c8c0"/><rect x="12" y="22" width="1" height="1" fill="#e4bcb0"/><rect x="13" y="22" width="1" height="1" fill="#7a4a3a"/><rect x="14" y="22" width="1" height="1" fill="#a06050"/><rect x="15" y="22" width="1" height="1" fill="#7a4a3a"/><rect x="16" y="22" width="1" height="1" fill="#a06050"/><rect x="17" y="22" width="1" height="1" fill="#a06050"/><rect x="18" y="22" width="1" height="1" fill="#a06050"/><rect x="19" y="22" width="1" height="1" fill="#a06050"/><rect x="20" y="22" width="1" height="1" fill="#a86858"/><rect x="21" y="22" width="1" height="1" fill="#d4a092"/><rect x="22" y="22" width="1" height="1" fill="#c890b0"/><rect x="23" y="22" width="1" height="1" fill="#9c948c"/><rect x="24" y="22" width="1" height="1" fill="#8a8a86"/><rect x="25" y="22" width="1" height="1" fill="#787470"/><rect x="26" y="22" width="1" height="1" fill="#4a2c1c"/><rect x="27" y="22" width="1" height="1" fill="#9c948c"/><rect x="28" y="22" width="1" height="1" fill="#8a8a86"/><rect x="29" y="22" width="1" height="1" fill="#8a8a86"/><rect x="30" y="22" width="1" height="1" fill="#b0601c"/><rect x="31" y="22" width="1" height="1" fill="#9a5a28"/><rect x="1" y="23" width="1" height="1" fill="#b0601c"/><rect x="2" y="23" width="1" height="1" fill="#b0601c"/><rect x="3" y="23" width="1" height="1" fill="#787470"/><rect x="4" y="23" width="1" height="1" fill="#787470"/><rect x="5" y="23" width="1" height="1" fill="#4a2c1c"/><rect x="6" y="23" width="1" height="1" fill="#8a8a86"/><rect x="7" y="23" width="1" height="1" fill="#d09038"/><rect x="8" y="23" width="1" height="1" fill="#b0601c"/><rect x="9" y="23" width="1" height="1" fill="#c07028"/><rect x="10" y="23" width="1" height="1" fill="#4a2c1c"/><rect x="11" y="23" width="1" height="1" fill="#e4bcb0"/><rect x="12" y="23" width="1" height="1" fill="#d4a092"/><rect x="13" y="23" width="1" height="1" fill="#c890b0"/><rect x="14" y="23" width="1" height="1" fill="#c890b0"/><rect x="15" y="23" width="1" height="1" fill="#d4a092"/><rect x="16" y="23" width="1" height="1" fill="#e4bcb0"/><rect x="17" y="23" width="1" height="1" fill="#d4a092"/><rect x="18" y="23" width="1" height="1" fill="#c890b0"/><rect x="19" y="23" width="1" height="1" fill="#d4a092"/><rect x="20" y="23" width="1" height="1" fill="#e4bcb0"/><rect x="21" y="23" width="1" height="1" fill="#c890b0"/><rect x="22" y="23" width="1" height="1" fill="#787470"/><rect x="23" y="23" width="1" height="1" fill="#9c948c"/><rect x="24" y="23" width="1" height="1" fill="#9c948c"/><rect x="25" y="23" width="1" height="1" fill="#9c948c"/><rect x="26" y="23" width="1" height="1" fill="#8a8a86"/><rect x="27" y="23" width="1" height="1" fill="#9a5a28"/><rect x="28" y="23" width="1" height="1" fill="#8a8a86"/><rect x="29" y="23" width="1" height="1" fill="#8a8a86"/><rect x="30" y="23" width="1" height="1" fill="#8a8a86"/><rect x="31" y="23" width="1" height="1" fill="#9c948c"/><rect x="2" y="24" width="1" height="1" fill="#9a5a28"/><rect x="3" y="24" width="1" height="1" fill="#8a8a86"/><rect x="4" y="24" width="1" height="1" fill="#8a8a86"/><rect x="5" y="24" width="1" height="1" fill="#8a8a86"/><rect x="6" y="24" width="1" height="1" fill="#8a8a86"/><rect x="7" y="24" width="1" height="1" fill="#8a8a86"/><rect x="8" y="24" width="1" height="1" fill="#8a8a86"/><rect x="9" y="24" width="1" height="1" fill="#c07028"/><rect x="10" y="24" width="1" height="1" fill="#787470"/><rect x="11" y="24" width="1" height="1" fill="#a86858"/><rect x="12" y="24" width="1" height="1" fill="#f0d6cc"/><rect x="13" y="24" width="1" height="1" fill="#e8c8c0"/><rect x="14" y="24" width="1" height="1" fill="#c08070"/><rect x="15" y="24" width="1" height="1" fill="#e4bcb0"/><rect x="16" y="24" width="1" height="1" fill="#a86858"/><rect x="17" y="24" width="1" height="1" fill="#e8c8c0"/><rect x="18" y="24" width="1" height="1" fill="#d4a092"/><rect x="19" y="24" width="1" height="1" fill="#e4bcb0"/><rect x="20" y="24" width="1" height="1" fill="#f0d6cc"/><rect x="21" y="24" width="1" height="1" fill="#c08070"/><rect x="22" y="24" width="1" height="1" fill="#787470"/><rect x="23" y="24" width="1" height="1" fill="#9c948c"/><rect x="24" y="24" width="1" height="1" fill="#4a2c1c"/><rect x="25" y="24" width="1" height="1" fill="#9a5a28"/><rect x="26" y="24" width="1" height="1" fill="#b0601c"/><rect x="27" y="24" width="1" height="1" fill="#787470"/><rect x="28" y="24" width="1" height="1" fill="#d09038"/><rect x="29" y="24" width="1" height="1" fill="#b0601c"/><rect x="30" y="24" width="1" height="1" fill="#b0601c"/><rect x="2" y="25" width="1" height="1" fill="#2a1c18"/><rect x="3" y="25" width="1" height="1" fill="#b0601c"/><rect x="4" y="25" width="1" height="1" fill="#2a1c18"/><rect x="5" y="25" width="1" height="1" fill="#2a1c18"/><rect x="6" y="25" width="1" height="1" fill="#3a2418"/><rect x="7" y="25" width="1" height="1" fill="#2a1c18"/><rect x="8" y="25" width="1" height="1" fill="#2a1c18"/><rect x="9" y="25" width="1" height="1" fill="#3a2418"/><rect x="10" y="25" width="1" height="1" fill="#3a2418"/><rect x="11" y="25" width="1" height="1" fill="#787470"/><rect x="12" y="25" width="1" height="1" fill="#e8c8c0"/><rect x="13" y="25" width="1" height="1" fill="#d4a092"/><rect x="14" y="25" width="1" height="1" fill="#f0d6cc"/><rect x="15" y="25" width="1" height="1" fill="#d4a092"/><rect x="16" y="25" width="1" height="1" fill="#a86858"/><rect x="17" y="25" width="1" height="1" fill="#d4a092"/><rect x="18" y="25" width="1" height="1" fill="#e4bcb0"/><rect x="19" y="25" width="1" height="1" fill="#f0d6cc"/><rect x="20" y="25" width="1" height="1" fill="#a86858"/><rect x="21" y="25" width="1" height="1" fill="#b0601c"/><rect x="22" y="25" width="1" height="1" fill="#787470"/><rect x="23" y="25" width="1" height="1" fill="#b0601c"/><rect x="24" y="25" width="1" height="1" fill="#d09038"/><rect x="25" y="25" width="1" height="1" fill="#9c948c"/><rect x="26" y="25" width="1" height="1" fill="#8a8a86"/><rect x="27" y="25" width="1" height="1" fill="#b0601c"/><rect x="28" y="25" width="1" height="1" fill="#8a8a86"/><rect x="29" y="25" width="1" height="1" fill="#b0601c"/><rect x="30" y="25" width="1" height="1" fill="#8a8a86"/><rect x="3" y="26" width="1" height="1" fill="#2a1c18"/><rect x="4" y="26" width="1" height="1" fill="#b0601c"/><rect x="5" y="26" width="1" height="1" fill="#2a1c18"/><rect x="6" y="26" width="1" height="1" fill="#2a1c18"/><rect x="7" y="26" width="1" height="1" fill="#2a1c18"/><rect x="8" y="26" width="1" height="1" fill="#2a1c18"/><rect x="9" y="26" width="1" height="1" fill="#3a2418"/><rect x="10" y="26" width="1" height="1" fill="#3a2418"/><rect x="11" y="26" width="1" height="1" fill="#4a2c1c"/><rect x="12" y="26" width="1" height="1" fill="#9c948c"/><rect x="13" y="26" width="1" height="1" fill="#d4a092"/><rect x="14" y="26" width="1" height="1" fill="#e4bcb0"/><rect x="15" y="26" width="1" height="1" fill="#e4bcb0"/><rect x="16" y="26" width="1" height="1" fill="#f0d6cc"/><rect x="17" y="26" width="1" height="1" fill="#d4a092"/><rect x="18" y="26" width="1" height="1" fill="#8c8a90"/><rect x="19" y="26" width="1" height="1" fill="#e4bcb0"/><rect x="20" y="26" width="1" height="1" fill="#8a8a86"/><rect x="21" y="26" width="1" height="1" fill="#b0601c"/><rect x="22" y="26" width="1" height="1" fill="#4a2c1c"/><rect x="23" y="26" width="1" height="1" fill="#d09038"/><rect x="24" y="26" width="1" height="1" fill="#c07028"/><rect x="25" y="26" width="1" height="1" fill="#b0601c"/><rect x="26" y="26" width="1" height="1" fill="#8a8a86"/><rect x="27" y="26" width="1" height="1" fill="#787470"/><rect x="28" y="26" width="1" height="1" fill="#9c948c"/><rect x="29" y="26" width="1" height="1" fill="#b0601c"/><rect x="4" y="27" width="1" height="1" fill="#2a1c18"/><rect x="5" y="27" width="1" height="1" fill="#3a2418"/><rect x="6" y="27" width="1" height="1" fill="#3a2418"/><rect x="7" y="27" width="1" height="1" fill="#b0601c"/><rect x="8" y="27" width="1" height="1" fill="#3a2418"/><rect x="9" y="27" width="1" height="1" fill="#3a2418"/><rect x="10" y="27" width="1" height="1" fill="#2a1c18"/><rect x="11" y="27" width="1" height="1" fill="#787470"/><rect x="12" y="27" width="1" height="1" fill="#c07028"/><rect x="13" y="27" width="1" height="1" fill="#c07028"/><rect x="14" y="27" width="1" height="1" fill="#d4a092"/><rect x="15" y="27" width="1" height="1" fill="#e4bcb0"/><rect x="16" y="27" width="1" height="1" fill="#a86858"/><rect x="17" y="27" width="1" height="1" fill="#d4a092"/><rect x="18" y="27" width="1" height="1" fill="#c08070"/><rect x="19" y="27" width="1" height="1" fill="#9a5a28"/><rect x="20" y="27" width="1" height="1" fill="#8a8a86"/><rect x="21" y="27" width="1" height="1" fill="#8a8a86"/><rect x="22" y="27" width="1" height="1" fill="#9a5a28"/><rect x="23" y="27" width="1" height="1" fill="#9c948c"/><rect x="24" y="27" width="1" height="1" fill="#8a8a86"/><rect x="25" y="27" width="1" height="1" fill="#787470"/><rect x="26" y="27" width="1" height="1" fill="#9c948c"/><rect x="27" y="27" width="1" height="1" fill="#787470"/><rect x="28" y="27" width="1" height="1" fill="#c07028"/><rect x="5" y="28" width="1" height="1" fill="#2a1c18"/><rect x="6" y="28" width="1" height="1" fill="#3a2418"/><rect x="7" y="28" width="1" height="1" fill="#3a2418"/><rect x="8" y="28" width="1" height="1" fill="#2a1c18"/><rect x="9" y="28" width="1" height="1" fill="#b0601c"/><rect x="10" y="28" width="1" height="1" fill="#2a1c18"/><rect x="11" y="28" width="1" height="1" fill="#4a2c1c"/><rect x="12" y="28" width="1" height="1" fill="#c07028"/><rect x="13" y="28" width="1" height="1" fill="#b0601c"/><rect x="14" y="28" width="1" height="1" fill="#8a8a86"/><rect x="15" y="28" width="1" height="1" fill="#e0c0b8"/><rect x="16" y="28" width="1" height="1" fill="#9a8aa0"/><rect x="17" y="28" width="1" height="1" fill="#a8b8e8"/><rect x="18" y="28" width="1" height="1" fill="#9a8aa0"/><rect x="19" y="28" width="1" height="1" fill="#8a8a86"/><rect x="20" y="28" width="1" height="1" fill="#a8b8e8"/><rect x="21" y="28" width="1" height="1" fill="#9a8aa0"/><rect x="22" y="28" width="1" height="1" fill="#a8b8e8"/><rect x="23" y="28" width="1" height="1" fill="#e0c0b8"/><rect x="24" y="28" width="1" height="1" fill="#a8b8e8"/><rect x="25" y="28" width="1" height="1" fill="#e0c0b8"/><rect x="26" y="28" width="1" height="1" fill="#9c948c"/><rect x="27" y="28" width="1" height="1" fill="#9a5a28"/><rect x="6" y="29" width="1" height="1" fill="#3a2418"/><rect x="7" y="29" width="1" height="1" fill="#b0601c"/><rect x="8" y="29" width="1" height="1" fill="#2a1c18"/><rect x="9" y="29" width="1" height="1" fill="#3a2418"/><rect x="10" y="29" width="1" height="1" fill="#3a2418"/><rect x="11" y="29" width="1" height="1" fill="#b0601c"/><rect x="12" y="29" width="1" height="1" fill="#9a5a28"/><rect x="13" y="29" width="1" height="1" fill="#9a5a28"/><rect x="14" y="29" width="1" height="1" fill="#9a5a28"/><rect x="15" y="29" width="1" height="1" fill="#d8d0e0"/><rect x="16" y="29" width="1" height="1" fill="#e0c0b8"/><rect x="17" y="29" width="1" height="1" fill="#e0c0b8"/><rect x="18" y="29" width="1" height="1" fill="#8a8a86"/><rect x="19" y="29" width="1" height="1" fill="#8a8a86"/><rect x="20" y="29" width="1" height="1" fill="#d8d0e0"/><rect x="21" y="29" width="1" height="1" fill="#9a8aa0"/><rect x="22" y="29" width="1" height="1" fill="#9a8aa0"/><rect x="23" y="29" width="1" height="1" fill="#d8d0e0"/><rect x="24" y="29" width="1" height="1" fill="#8a8a86"/><rect x="25" y="29" width="1" height="1" fill="#8a8a86"/><rect x="26" y="29" width="1" height="1" fill="#9a5a28"/><rect x="7" y="30" width="1" height="1" fill="#b0601c"/><rect x="8" y="30" width="1" height="1" fill="#2a1c18"/><rect x="9" y="30" width="1" height="1" fill="#3a2418"/><rect x="10" y="30" width="1" height="1" fill="#2a1c18"/><rect x="11" y="30" width="1" height="1" fill="#c07028"/><rect x="12" y="30" width="1" height="1" fill="#4a2c1c"/><rect x="13" y="30" width="1" height="1" fill="#d09038"/><rect x="14" y="30" width="1" height="1" fill="#8a8a86"/><rect x="15" y="30" width="1" height="1" fill="#d8d0e0"/><rect x="16" y="30" width="1" height="1" fill="#8a8a86"/><rect x="17" y="30" width="1" height="1" fill="#9a8aa0"/><rect x="18" y="30" width="1" height="1" fill="#8a8a86"/><rect x="19" y="30" width="1" height="1" fill="#9a8aa0"/><rect x="20" y="30" width="1" height="1" fill="#a8b8e8"/><rect x="21" y="30" width="1" height="1" fill="#e0c0b8"/><rect x="22" y="30" width="1" height="1" fill="#e0c0b8"/><rect x="23" y="30" width="1" height="1" fill="#e0c0b8"/><rect x="24" y="30" width="1" height="1" fill="#9a8aa0"/><rect x="25" y="30" width="1" height="1" fill="#d8d0e0"/><rect x="9" y="31" width="1" height="1" fill="#b0601c"/><rect x="10" y="31" width="1" height="1" fill="#2a1c18"/><rect x="11" y="31" width="1" height="1" fill="#4a2c1c"/><rect x="12" y="31" width="1" height="1" fill="#b0601c"/><rect x="13" y="31" width="1" height="1" fill="#b0601c"/><rect x="14" y="31" width="1" height="1" fill="#b0601c"/><rect x="15" y="31" width="1" height="1" fill="#9a8aa0"/><rect x="16" y="31" width="1" height="1" fill="#9a8aa0"/><rect x="17" y="31" width="1" height="1" fill="#d8d0e0"/><rect x="18" y="31" width="1" height="1" fill="#9a8aa0"/><rect x="19" y="31" width="1" height="1" fill="#d8d0e0"/><rect x="20" y="31" width="1" height="1" fill="#9a8aa0"/><rect x="21" y="31" width="1" height="1" fill="#9a8aa0"/><rect x="22" y="31" width="1" height="1" fill="#a8b8e8"/><rect x="23" y="31" width="1" height="1" fill="#e0c0b8"/><rect x="11" y="32" width="1" height="1" fill="#787470"/><rect x="12" y="32" width="1" height="1" fill="#8a8a86"/><rect x="13" y="32" width="1" height="1" fill="#b0601c"/><rect x="14" y="32" width="1" height="1" fill="#9c948c"/><rect x="15" y="32" width="1" height="1" fill="#a8b8e8"/><rect x="16" y="32" width="1" height="1" fill="#8a8a86"/><rect x="17" y="32" width="1" height="1" fill="#a8b8e8"/><rect x="18" y="32" width="1" height="1" fill="#e0c0b8"/><rect x="19" y="32" width="1" height="1" fill="#9a8aa0"/><rect x="20" y="32" width="1" height="1" fill="#8a8a86"/><rect x="21" y="32" width="1" height="1" fill="#e0c0b8"/></g></svg>
  <div class="a n16" style="left:1648px;top:17px">Mitchell Admin (11395225-15-0-all)</div>
</div>

<div id="cp">
  <div class="a" style="left:19px;top:18px;font-size:22.5px;line-height:22px;color:#71639e;transform:scaleY(1.05);transform-origin:0 17px">Activity Types</div>
  <div class="a" style="left:161.3px;top:18px;font-size:22.5px;line-height:22px;color:#71639e;transform:scaleY(1.05);transform-origin:0 17px">/</div>
  <div class="a" style="left:171.6px;top:18px;font-size:22.5px;line-height:22px;color:#666;transform:scaleY(1.05);transform-origin:0 17px">New</div>
  <div class="a" style="left:19px;top:56px;width:62px;height:38px;background:#71639e;border-radius:3px"></div>
  <div class="a n16" style="left:30.6px;top:67px;color:#fff">Save</div>
  <div class="a" style="left:86px;top:56px;width:80px;height:38px;background:#fff;border:1px solid #dcdcdc;border-radius:3px"></div>
  <div class="a n16" style="left:98px;top:67px;color:#212529">Discard</div>
</div>

<div id="bg"></div>
<div id="band"></div>
<div id="sheet"></div>

<div class="a b t16" style="left:268px;top:213px">Name</div>
<div class="a" style="left:268px;top:232px;width:860px;height:47px;background:#d2d2ff;border:1px solid #6f62a6;border-radius:3px"></div>
<div class="a" style="left:274px;top:238px;width:1px;height:36px;background:#222"></div>
<div class="a" style="left:274.5px;top:238.6px;font-size:32.3px;line-height:32px;color:#777;transform:scaleY(1.02);transform-origin:0 27px">e.g. Schedule a meeting</div>

<div class="a sect" style="left:269px;top:335px">Activity Settings</div>
<div class="hs" style="left:269px;top:353px;width:670px"></div>
<div class="a sect" style="left:960px;top:335px">Next Activity</div>
<div class="hs" style="left:960px;top:353px;width:669px"></div>

<div class="vl" style="left:455px;top:366px;height:247px"></div>
<div class="vl" style="left:1146px;top:366px;height:165px"></div>

<div class="a b t16" style="left:268px;top:371px">Action</div>
<div class="a b t16" style="left:268px;top:412px">Default User</div>
<div class="a b t16" style="left:268px;top:453px">Model</div>
<div class="a b t16" style="left:268px;top:495px">Default Summary</div>
<div class="a b t16" style="left:268px;top:536px">Icon</div>
<div class="a b t16" style="left:268px;top:577px">Decoration Type</div>

<div class="sel" style="left:466px;top:366px;width:448px"></div>
<div class="a t16" style="left:473px;top:371px">None</div>
<svg class="chev" style="left:896px;top:375px" viewBox="0 0 13 8"><polyline points="1,1.2 6,5.8 11,1.2" fill="none" stroke="#111" stroke-width="2"/></svg>
<div class="inp" style="left:466px;top:407px;width:448px"></div>
<div class="tri" style="left:899px;top:421px"></div>
<div class="sel" style="left:466px;top:448px;width:448px"></div>
<div class="a n16" style="left:473px;top:453px">Applicant</div>
<svg class="chev" style="left:896px;top:457px" viewBox="0 0 13 8"><polyline points="1,1.2 6,5.8 11,1.2" fill="none" stroke="#111" stroke-width="2"/></svg>
<div class="inp" style="left:466px;top:490px;width:448px;height:31px"></div>
<div class="inp" style="left:466px;top:531px;width:448px"></div>
<div class="sel" style="left:466px;top:572px;width:448px"></div>
<svg class="chev" style="left:896px;top:581px" viewBox="0 0 13 8"><polyline points="1,1.2 6,5.8 11,1.2" fill="none" stroke="#111" stroke-width="2"/></svg>

<div class="a b t16" style="left:960px;top:371px">Chaining Type</div>
<div class="a b t16" style="left:960px;top:412px">Suggest</div>
<div class="a b t16" style="left:960px;top:453px">Email templates</div>
<div class="a b t16" style="left:960px;top:495px">Schedule</div>

<div class="sel foc" style="left:1157px;top:366px;width:448px"></div>
<div class="a n16" style="left:1165px;top:370px">Suggest Next Activity</div>
<svg class="chev" style="left:1587px;top:375px" viewBox="0 0 13 8"><polyline points="1,1.2 6,5.8 11,1.2" fill="none" stroke="#111" stroke-width="2"/></svg>
<div class="inp" style="left:1157px;top:407px;width:448px"></div>
<div class="tri" style="left:1589px;top:422px"></div>
<div class="inp" style="left:1157px;top:448px;width:448px"></div>
<div class="tri" style="left:1589px;top:463px"></div>
<div class="inp" style="left:1157px;top:490px;width:38px;height:31px"></div>
<div class="a t16" style="left:1158px;top:498px">0</div>
<div class="sel foc" style="left:1201px;top:493px;width:114px"></div>
<div class="a n16" style="left:1211px;top:497px">days</div>
<svg class="chev" style="left:1297px;top:502px" viewBox="0 0 13 8"><polyline points="1,1.2 6,5.8 11,1.2" fill="none" stroke="#111" stroke-width="2"/></svg>
<div class="sel foc" style="left:1321px;top:493px;width:284px"></div>
<div class="a n16" style="left:1328px;top:497px">after previous activity deadline</div>
<svg class="chev" style="left:1587px;top:502px" viewBox="0 0 13 8"><polyline points="1,1.2 6,5.8 11,1.2" fill="none" stroke="#111" stroke-width="2"/></svg>

<div class="a b t16" style="left:268px;top:631px">Default Note</div>
<div class="a" style="left:268px;top:650px;width:1382px;height:200px;border:1px solid #d8d8d8"></div>

</body></html>
